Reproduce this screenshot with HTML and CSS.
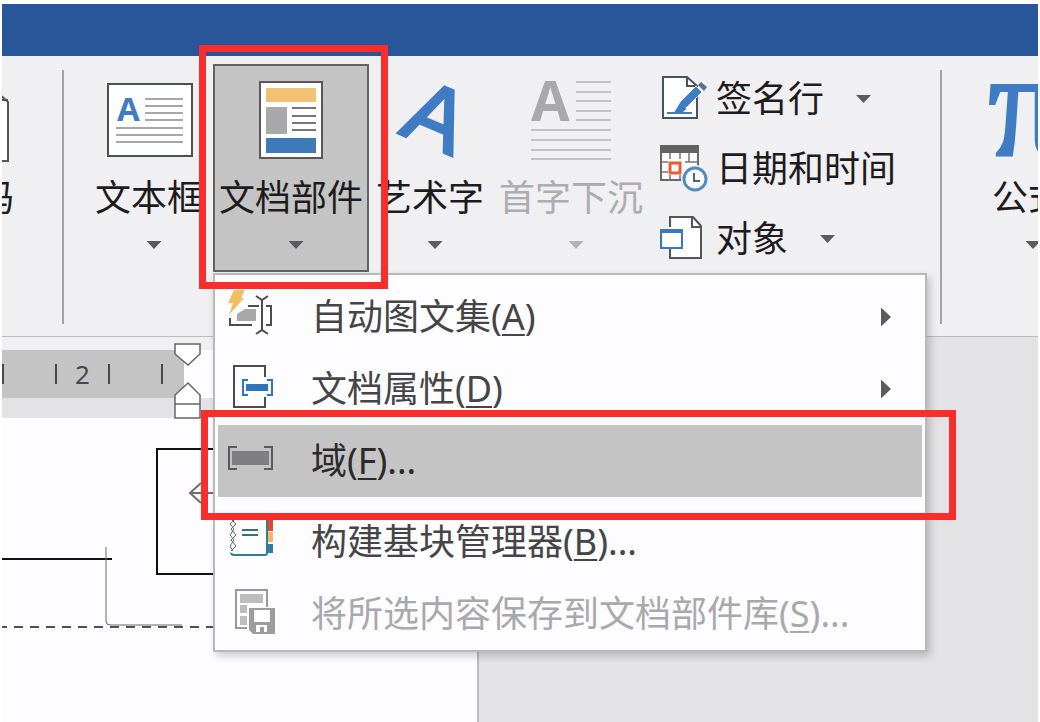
FILE: index.html
```html
<!DOCTYPE html>
<html lang="zh-CN">
<head>
    <meta charset="UTF-8">
    <meta name="viewport" content="width=device-width, initial-scale=1.0">
    <title>文档部件</title>
    <link rel="stylesheet" href="styles.css">
</head>
<body>
    <div class="app">
        <header class="title-bar"></header>

        <div class="ribbon">
            <div class="group group-header">
                <button class="big-btn" type="button">
                    <svg class="big-icon" width="62" height="80" viewBox="0 0 62 80">
                        <path d="M1 14h51l9 8v59H1z" fill="#fff" stroke="#555" stroke-width="2"/>
                        <path d="M53 12v8h8" fill="none" stroke="#555" stroke-width="2"/>
                    </svg>
                    <span class="label">码</span>
                    <span class="caret"></span>
                </button>
            </div>

            <div class="group group-text">
                <button class="big-btn w-textbox" type="button">
                    <svg class="big-icon" width="86" height="80" viewBox="0 0 86 80">
                        <rect x="2" y="4" width="84" height="72" fill="#fff" stroke="#4c4f54" stroke-width="2"/>
                        <text x="11" y="41" class="icon-a" font-size="33" fill="#3f7cc4">A</text>
                        <path d="M39 19h38M39 26h38M39 33h38M39 40h38M10 48h67M10 55h67M10 62h67" stroke="#8a8a8c" stroke-width="1.5"/>
                    </svg>
                    <span class="label">文本框</span>
                    <span class="caret"></span>
                </button>

                <div class="dropdown">
                    <button class="big-btn pressed" type="button" aria-expanded="true">
                        <svg class="big-icon" width="64" height="80" viewBox="0 0 64 80">
                            <rect x="1" y="2" width="62" height="76" fill="#fff" stroke="#5c5658" stroke-width="2"/>
                            <path d="M7 8h50v14H7z" fill="#f3c173"/>
                            <path d="M7 27h21v27H7z" fill="#a9a9ab"/>
                            <path d="M33 28h24M33 36h24M33 43h24M33 50h24" stroke="#7d7478" stroke-width="2"/>
                            <path d="M7 58h50v15H7z" fill="#3f7ab8"/>
                        </svg>
                        <span class="label">文档部件</span>
                        <span class="caret"></span>
                    </button>

                    <ul class="menu">
                        <li class="menu-row">
                            <button class="menu-item" type="button">
                                <svg class="menu-icon" width="48" height="48" viewBox="0 0 48 48">
                                    <path d="M2 25v7h22M20 13h11M38 13h5v19h-5" fill="none" stroke="#4c4c4e" stroke-width="2"/>
                                    <path d="M17 16h11v12H9v-7z" fill="#a9a9ab"/>
                                    <path d="M28 3l6 4 6-4M34 7v31M28 41l6-4 6 4" fill="none" stroke="#4c4c4e" stroke-width="2"/>
                                    <path d="M6-3h11l-4 8h3L1 22l4-12H0z" fill="#f4bd60"/>
                                </svg>
                                <span>自动图文集(<u>A</u>)</span>
                                <span class="submenu-arrow"></span>
                            </button>
                        </li>
                        <li class="menu-row">
                            <button class="menu-item" type="button">
                                <svg class="menu-icon" width="48" height="48" viewBox="0 0 48 48">
                                    <path d="M37 12V1H6v41h31V32" fill="#fff" stroke="#4c4c4e" stroke-width="2"/>
                                    <path d="M20 15h-5v15h5M39 15h5v15h-5" fill="none" stroke="#2e75c0" stroke-width="2"/>
                                    <path d="M18 19h22v7H18z" fill="#2e75c0"/>
                                </svg>
                                <span>文档属性(<u>D</u>)</span>
                                <span class="submenu-arrow"></span>
                            </button>
                        </li>
                        <li class="menu-row">
                            <button class="menu-item active" type="button">
                                <svg class="menu-icon" width="48" height="48" viewBox="0 0 48 48">
                                    <path d="M9 10H1v22h8M36 10h8v22h-8" fill="none" stroke="#5a5a5c" stroke-width="2"/>
                                    <path d="M4 14h37v14H4z" fill="#7f7f81"/>
                                </svg>
                                <span>域(<u>F</u>)...</span>
                            </button>
                            <div class="mark mark-item"></div>
                        </li>
                        <li class="menu-row spaced">
                            <button class="menu-item" type="button">
                                <svg class="menu-icon" width="48" height="48" viewBox="0 0 48 48">
                                    <path d="M38 2h7v11h-7z" fill="#e0492d"/>
                                    <path d="M38 14h7v10h-7z" fill="#f2b75a"/>
                                    <path d="M38 26h7v9h-7z" fill="#2f7da3"/>
                                    <path d="M6 1h33v34q0 2-2 2H6q-3 0-3-3" fill="#fff" stroke="#2b8098" stroke-width="2"/>
                                    <path d="M5 0v35" stroke="#fdfcfe" stroke-width="5"/>
                                    <path d="M3 1l5 5-5 5 5 6-5 5 5 6-5 5M7 1L2 6l4 5-4 6 4 5-4 6 3 5" fill="none" stroke="#5d6668" stroke-width="1"/>
                                    <path d="M14 12h16M14 17h16" stroke="#37706f" stroke-width="2"/>
                                </svg>
                                <span>构建基块管理器(<u>B</u>)...</span>
                            </button>
                        </li>
                        <li class="menu-row">
                            <button class="menu-item" type="button" disabled>
                                <svg class="menu-icon" width="48" height="48" viewBox="0 0 48 48">
                                    <path d="M19 38H8V0h31v17" fill="none" stroke="#99999b" stroke-width="2"/>
                                    <path d="M12 4h23v9H12zM12 15h7v8h-7zM12 26h7v9h-7z" fill="#bdbdbf"/>
                                    <path d="M21 18h26v26H25l-4-4z" fill="#9c9c9e"/>
                                    <path d="M26 20h16v12H26zM28 35h11v7h-3v-5h-4v5h-4z" fill="#fff"/>
                                </svg>
                                <span>将所选内容保存到文档部件库(<u>S</u>)...</span>
                            </button>
                        </li>
                    </ul>
                    <div class="mark mark-button"></div>
                </div>

                <button class="big-btn w-wordart" type="button">
                    <svg class="big-icon" width="72" height="80" viewBox="0 0 72 80">
                        <text x="0" y="0" class="icon-art" transform="translate(4 53) rotate(23)">A</text>
                    </svg>
                    <span class="label">艺术字</span>
                    <span class="caret"></span>
                </button>

                <button class="big-btn w-dropcap" type="button" disabled>
                    <svg class="big-icon" width="82" height="80" viewBox="0 0 82 80">
                        <text x="1" y="41" class="icon-a" font-size="56" fill="#a9a8ac">A</text>
                        <path d="M46 2h35M46 12h35M46 21h35M46 31h35M46 40h35M1 50h80M1 60h80M1 70h80M1 79h80" stroke="#b3b2b5" stroke-width="1.5"/>
                    </svg>
                    <span class="label">首字下沉</span>
                    <span class="caret"></span>
                </button>

                <div class="small-column">
                    <button class="small-btn" type="button">
                        <svg width="48" height="48" viewBox="0 0 48 48">
                            <path d="M27 2H3v41h34V11z" fill="#fff" stroke="#4a5262" stroke-width="2"/>
                            <path d="M27 2v9h9" fill="none" stroke="#4a5262" stroke-width="2"/>
                            <path d="M16 36l4-9L36 11l6 6-16 16z" fill="#3f7cc4" stroke="#f0eff1" stroke-width="1"/>
                            <path d="M38 10l3-3 6 5-3 4z" fill="#5b6f96"/>
                            <path d="M7 38h25M15 38l5-8 5 4-5 4z" fill="#3f7cc4" stroke="#3f7cc4" stroke-width="2"/>
                        </svg>
                        <span>签名行</span>
                        <span class="caret"></span>
                    </button>
                    <button class="small-btn" type="button">
                        <svg width="48" height="48" viewBox="0 0 48 48">
                            <path d="M1 1h37v34H1z" fill="#fff" stroke="#6a6768" stroke-width="2"/>
                            <path d="M0 0h39v8H0z" fill="#656264"/>
                            <path d="M10 8v6M20 8v6M29 8v9M10 30v4M20 30v4M2 17h6M2 27h6M25 17h13" stroke="#767376" stroke-width="1.5"/>
                            <path d="M10 18h10v10H10z" fill="#fff" stroke="#e4602e" stroke-width="3"/>
                            <circle cx="35" cy="34" r="14" fill="#f0eff1"/>
                            <circle cx="35" cy="34" r="11" fill="#fff" stroke="#4f8cc2" stroke-width="3"/>
                            <path d="M34 28v8h6" fill="none" stroke="#4d5f86" stroke-width="2"/>
                        </svg>
                        <span>日期和时间</span>
                    </button>
                    <button class="small-btn" type="button">
                        <svg width="48" height="48" viewBox="0 0 48 48">
                            <path d="M10 12V2h23l8 9v32H10V34" fill="#fff" stroke="#555" stroke-width="2"/>
                            <path d="M32 2v10h9" fill="none" stroke="#555" stroke-width="2"/>
                            <path d="M1 15h21v18H1z" fill="#fff" stroke="#3b77bd" stroke-width="2"/>
                            <path d="M0 14h23v4H0z" fill="#3b77bd"/>
                        </svg>
                        <span>对象</span>
                        <span class="caret"></span>
                    </button>
                </div>
            </div>

            <div class="group group-symbol">
                <button class="big-btn w-equation" type="button">
                    <svg class="big-icon" width="76" height="80" viewBox="0 0 76 80">
                        <text x="-3" y="76" class="icon-pi">π</text>
                    </svg>
                    <span class="label">公式</span>
                    <span class="caret"></span>
                </button>
            </div>
        </div>

        <main class="workspace">
            <div class="sheet">
                <div class="ruler">
                    <div class="ruler-band">
                        <span class="tick"></span>
                        <span class="tick">2</span>
                        <span class="tick"></span>
                        <span class="tick"></span>
                    </div>
                    <svg class="indent" width="28" height="78" viewBox="0 0 28 78">
                        <path d="M1 1h25v10L14 22 1 11z" fill="#fff" stroke="#66666a" stroke-width="1.5"/>
                        <path d="M1 75V52l13-12 12 12v23zM1 61h25" fill="#fff" stroke="#66666a" stroke-width="1.5"/>
                    </svg>
                </div>
                <svg class="drawing" width="214" height="230" viewBox="0 0 214 230">
                    <path d="M214 31H155v125h59" fill="none" stroke="#111" stroke-width="2"/>
                    <path d="M199 65l-11 10 11 10M188 75h24" fill="none" stroke="#77696d" stroke-width="2"/>
                    <path d="M0 141h110" stroke="#111" stroke-width="2"/>
                    <path d="M104 129v74q0 4 4 4h72" fill="none" stroke="#5f6a6e" stroke-width="1"/>
                    <path d="M-4 209h218" stroke="#4e5254" stroke-width="2" stroke-dasharray="9 7"/>
                </svg>
            </div>
        </main>
    </div>
</body>
</html>
```
FILE: styles.css
```css
* {
    box-sizing: border-box;
}

body {
    margin: 0;
    padding: 4px 2px 0;
    background: #fff;
    color: #1c1c1e;
    font-family: "Noto Sans", "Noto Sans CJK SC", sans-serif;
    font-size: 36px;
    line-height: 44px;
}

button {
    margin: 0;
    padding: 0;
    border: 0;
    background: none;
    color: inherit;
    font: inherit;
    white-space: nowrap;
}

svg {
    display: block;
    flex: none;
    overflow: visible;
}

.app {
    display: flex;
    flex-direction: column;
    min-height: calc(100vh - 4px);
    overflow: hidden;
}

.title-bar {
    height: 52px;
    background: #285699;
}

/* ribbon */
.ribbon {
    display: flex;
    padding: 8px 0 12px;
    background: #f0eff1;
    border-bottom: 1px solid #bcbcbe;
}

.group {
    position: relative;
    display: flex;
    flex: none;
    align-items: flex-start;
    padding-bottom: 50px;
}

.group-header,
.group-text {
    background: linear-gradient(#a3a3a5, #a3a3a5) right 6px / 2px 100% no-repeat;
}

.group-header {
    width: 62px;
}

.group-header .big-btn {
    align-items: flex-end;
    width: 72px;
    margin-left: -60px;
}

.group-header .big-icon {
    margin-right: 5px;
}

.group-header .caret {
    margin-right: 24px;
}

.group-text {
    gap: 5px;
    padding-left: 26px;
}

.group-symbol {
    padding-left: 30px;
}

.big-btn {
    display: flex;
    flex: none;
    flex-direction: column;
    align-items: center;
    padding: 16px 0 23px;
}

.w-textbox {
    width: 118px;
}

.w-wordart {
    width: 112px;
}

.w-dropcap {
    width: 160px;
}

.w-equation {
    width: 112px;
}

.big-btn .label {
    margin: 16px 0 21px;
}

.caret {
    flex: none;
    width: 15px;
    height: 8px;
    background: #5b5b5d;
    clip-path: polygon(0 0, 100% 0, 50% 100%);
}

.big-btn .caret {
    margin-left: 10px;
}

.big-btn:disabled {
    color: #adacb0;
}

.big-btn:disabled .caret {
    background: #b4b3b6;
}

.dropdown {
    position: relative;
    z-index: 2;
}

.pressed {
    width: 156px;
    padding: 14px 0 21px;
    border: 2px solid #626263;
    background: #c5c4c5;
}

.icon-a {
    font-family: "Open Sans", sans-serif;
    font-weight: 700;
}

.icon-art {
    font-family: "Liberation Sans", sans-serif;
    font-size: 88px;
    fill: #3f7cc4;
    stroke: #3f7cc4;
    stroke-width: 3;
}

.icon-pi {
    font-family: "Liberation Serif", serif;
    font-size: 156px;
    font-weight: 700;
    fill: #3f7cc4;
}

.small-column {
    display: flex;
    flex-direction: column;
    width: 286px;
    padding-left: 4px;
}

.small-btn {
    display: flex;
    align-items: center;
    gap: 8px;
    height: 70px;
}

.small-btn .caret {
    margin-left: 24px;
}

/* drop-down menu */
.menu {
    position: absolute;
    top: 100%;
    left: 0;
    width: 714px;
    margin: 1px 0 0;
    padding: 6px 3px 0;
    list-style: none;
    color: #454547;
    background: #fdfcfe;
    border: 2px solid #b9b9bc;
    box-shadow: 3px 4px 8px rgba(0, 0, 0, 0.2);
}

.menu-row {
    position: relative;
}

.menu-row.spaced {
    margin-top: 9px;
}

.menu-item {
    display: flex;
    align-items: center;
    width: 100%;
    height: 72px;
    padding: 0 31px 0 10px;
    text-align: left;
}

.menu-item.active {
    color: #2a2a2c;
    background: #c5c4c5;
}

.menu-item:disabled {
    color: #a9a9ad;
}

.menu-icon {
    margin-right: 35px;
}

.menu-item u {
    text-decoration-thickness: 2px;
    text-underline-offset: 4px;
}

.submenu-arrow {
    width: 10px;
    height: 19px;
    margin-left: auto;
    background: #5b5b5d;
    clip-path: polygon(0 0, 100% 50%, 0 100%);
}

/* red highlight frames */
.mark {
    position: absolute;
    z-index: 3;
    border: 7px solid #fa2d2d;
    pointer-events: none;
}

.mark-button {
    top: -19px;
    right: -19px;
    bottom: -17px;
    left: -14px;
}

.mark-item {
    top: -15px;
    right: -34px;
    bottom: -23px;
    left: -17px;
}

/* document */
.workspace {
    display: flex;
    flex: 1;
    background: #e3e2e4;
}

.sheet {
    width: 477px;
    background: #fdfcfe;
    border-right: 2px solid #bcbcbe;
}

.ruler {
    position: relative;
    padding: 13px 0 20px;
    background: linear-gradient(#f0eff1 13px, #fdfcfe 13px, #fdfcfe 61px, #e3e2e4 61px);
}

.ruler-band {
    display: flex;
    align-items: center;
    width: 182px;
    height: 48px;
    overflow: hidden;
    background: #c5c4c5;
}

.tick {
    flex: none;
    width: 53px;
    height: 20px;
    border-left: 2px solid #48484a;
    color: #48484a;
    font-size: 26px;
    line-height: 20px;
    text-align: center;
}

.indent {
    position: absolute;
    top: 6px;
    left: 172px;
}
```
